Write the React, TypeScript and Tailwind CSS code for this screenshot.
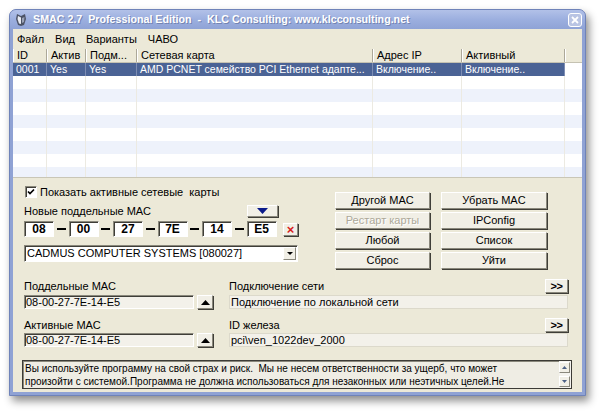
import React from "react";
import clsx from "clsx";

const colW = ["w-[34px]", "w-[39px]", "w-[51px]", "w-[236px]", "w-[89px]", "w-[103px]"];
const headers = ["ID", "Актив", "Подм...", "Сетевая карта", "Адрес IP", "Активный"];
const selRow = ["0001", "Yes", "Yes", "AMD PCNET семейство PCI Ethernet адапте...", "Включение..", "Включение.."];

function Btn({
  children,
  className,
  disabled,
}: {
  children?: React.ReactNode;
  className?: string;
  disabled?: boolean;
}) {
  return (
    <div
      className={clsx(
        "flex items-center justify-center border border-t-white border-l-white border-r-[#8a887c] border-b-[#8a887c] bg-[#f1efe6] text-[11px] leading-none shadow-[1px_1px_0_#3f3e38]",
        disabled ? "text-[#aca899] [text-shadow:1px_1px_0_#ffffff]" : "text-black",
        className
      )}
    >
      {children}
    </div>
  );
}

function Sunken({ children, className }: { children?: React.ReactNode; className?: string }) {
  return (
    <div
      className={clsx(
        "border border-t-[#8a887c] border-l-[#8a887c] border-r-white border-b-white shadow-[inset_1px_1px_0_#3f3e38]",
        className
      )}
    >
      {children}
    </div>
  );
}

function TitleBar() {
  return (
    <div className="flex h-[19px] items-center rounded-t-[6px] bg-gradient-to-b from-[#b2c1e8] via-[#9cafdf] to-[#8fa3d6] pl-[4px] pr-[3px]">
      <svg width="14" height="14" viewBox="0 0 14 14" className="shrink-0">
        <path d="M3 1 L7 3 L11 1 L12 6 L10 12 L7 13 L4 12 L2 6 Z" fill="#4c5366" />
        <path d="M4 3 L7 4.5 L7 11 L5 10.5 L3.5 6 Z" fill="#e9ecf3" />
        <path d="M8 5 L10.5 4 L10 9 L8 10 Z" fill="#9aa2b6" />
      </svg>
      <span className="ml-[5px] whitespace-pre text-[10.7px] font-bold text-white [text-shadow:1px_1px_0_#7384b2]">
        SMAC 2.7  Professional Edition  -  KLC Consulting: www.klcconsulting.net
      </span>
      <div className="ml-auto flex h-[14px] w-[14px] items-center justify-center rounded-[3px] border border-white bg-[#b9c4e3]">
        <svg width="8" height="8" viewBox="0 0 8 8">
          <path d="M1 1 L7 7 M7 1 L1 7" stroke="#ffffff" strokeWidth="1.8" />
        </svg>
      </div>
    </div>
  );
}

function Table() {
  const blanks = [0, 1, 2, 3, 4, 5, 6, 7, 8];
  return (
    <div className="h-[128px] overflow-hidden bg-white text-[10.5px]">
      <div className="flex h-[14px] border-b border-b-[#c5c2b2] bg-[#ece9d8] text-[11px]">
        {headers.map((h, i) => (
          <div
            key={h}
            className={clsx(
              colW[i],
              "flex items-center border-r border-r-[#aca899] pl-[4px] leading-none shadow-[inset_1px_0_0_#ffffff]"
            )}
          >
            {h}
          </div>
        ))}
        <div className="flex-1 shadow-[inset_1px_0_0_#ffffff]" />
      </div>
      <div className="flex h-[13px] pr-[17px]">
        {selRow.map((c, i) => (
          <div
            key={i}
            className={clsx(
              colW[i],
              "flex items-center overflow-hidden whitespace-nowrap border-r border-r-[#7d8db3] bg-[#4b6395] pl-[3px] leading-none text-white"
            )}
          >
            {c}
          </div>
        ))}
      </div>
      {blanks.map((r) => (
        <div key={r} className={clsx("flex h-[13px]", r % 2 === 1 ? "bg-[#eef2fb]" : "bg-white")}>
          {colW.map((w) => (
            <div key={w} className={clsx(w, "border-r border-r-[#eceae2]")} />
          ))}
        </div>
      ))}
    </div>
  );
}

function MacBox({ v }: { v: string }) {
  return (
    <Sunken className="flex h-[16px] w-[30px] items-center justify-center bg-white text-[12px] font-bold leading-none">
      {v}
    </Sunken>
  );
}

function Dash() {
  return (
    <div className="flex w-[14.5px] items-center justify-center">
      <div className="h-[2px] w-[9px] bg-black" />
    </div>
  );
}

function UpBtn() {
  return (
    <Btn className="h-[14px] w-[16px]">
      <svg width="9" height="5" viewBox="0 0 9 5">
        <path d="M0 5 L4.5 0 L9 5 Z" fill="#000" />
      </svg>
    </Btn>
  );
}

function MoreBtn() {
  return <Btn className="h-[14px] w-[23px] text-[10px] font-bold tracking-[-0.5px]">&gt;&gt;</Btn>;
}

export default function App() {
  const macs = ["08", "00", "27", "7E", "14", "E5"];
  return (
    <div className="h-[419px] w-[600px] bg-white pl-[9px] pt-[9px] font-['Liberation_Sans',Arial,sans-serif] text-black">
      <div className="flex h-[387px] w-[577px] flex-col rounded-t-[7px] border border-[#6f83b9] bg-[#8fa2d4] shadow-[3px_5px_8px_rgba(0,0,0,0.45)]">
        <TitleBar />
        <div className="mx-[3px] mb-[3px] flex flex-1 flex-col bg-[#ece9d8]">
          {/* menu */}
          <div className="flex h-[20px] items-center gap-[11px] pl-[4px] text-[11px]">
            <span>Файл</span>
            <span>Вид</span>
            <span>Варианты</span>
            <span>ЧАВО</span>
          </div>

          <Table />

          <div className="flex flex-1 flex-col border-t border-t-[#c9c6b6] pl-[11px]">
            {/* top section */}
            <div className="flex items-start">
              <div className="flex w-[274px] flex-col">
                <div className="mt-[8px] flex h-[12px] items-center text-[11px]">
                  <Sunken className="ml-[1px] flex h-[12px] w-[12px] items-center justify-center bg-white">
                    <svg width="8" height="8" viewBox="0 0 8 8">
                      <path d="M1 3.5 L3 5.5 L7 1.5" stroke="#000" strokeWidth="1.7" fill="none" />
                    </svg>
                  </Sunken>
                  <span className="ml-[3px] whitespace-pre">Показать активные сетевые  карты</span>
                </div>
                <div className="mt-[8px] flex h-[11px] items-end">
                  <span className="text-[11px] leading-[11px]">Новые поддельные МАС</span>
                  <Btn className="ml-auto mr-[20px] h-[12px] w-[31px]">
                    <svg width="11" height="6" viewBox="0 0 11 6">
                      <path d="M0 0 L11 0 L5.5 6 Z" fill="#0a1a8a" />
                    </svg>
                  </Btn>
                </div>
                <div className="mt-[4px] flex h-[16px] items-center">
                  {macs.map((m, i) => (
                    <React.Fragment key={i}>
                      {i > 0 && <Dash />}
                      <MacBox v={m} />
                    </React.Fragment>
                  ))}
                  <Btn className="ml-auto h-[13px] w-[15px] text-[13px] font-bold text-[#d8201a]">
                    <span className="text-[#d8201a]">×</span>
                  </Btn>
                </div>
                <Sunken className="mt-[8px] flex h-[17px] items-center bg-white pl-[2px] text-[11px]">
                  <span>CADMUS COMPUTER SYSTEMS [080027]</span>
                  <Btn className="ml-auto mr-[1px] h-[13px] w-[13px] shadow-none">
                    <svg width="6" height="3" viewBox="0 0 6 3">
                      <path d="M0 0 L6 0 L3 3 Z" fill="#000" />
                    </svg>
                  </Btn>
                </Sunken>
              </div>

              <div className="ml-[37px] mt-[14px] grid grid-cols-[95px_106px] gap-x-[11px] gap-y-[3px]">
                <Btn className="h-[17px]">Другой MAC</Btn>
                <Btn className="h-[17px]">Убрать MAC</Btn>
                <Btn className="h-[17px]" disabled>
                  Рестарт карты
                </Btn>
                <Btn className="h-[17px]">IPConfig</Btn>
                <Btn className="h-[17px]">Любой</Btn>
                <Btn className="h-[17px]">Список</Btn>
                <Btn className="h-[17px]">Сброс</Btn>
                <Btn className="h-[17px]">Уйти</Btn>
              </div>
            </div>

            {/* middle section */}
            <div className="mt-[9px] grid grid-cols-[189px_339px] gap-x-[16px] text-[11px]">
              <div className="flex flex-col">
                <div className="flex h-[15px] items-end leading-[13px]">Поддельные МАС</div>
                <div className="mt-[2px] flex h-[14px] items-center gap-[3px]">
                  <Sunken className="flex h-[14px] w-[170px] items-center bg-[#f3f1ea] pl-[1px] leading-none">
                    08-00-27-7E-14-E5
                  </Sunken>
                  <UpBtn />
                </div>
                <div className="mt-[8px] flex h-[15px] items-end leading-[13px]">Активные МАС</div>
                <div className="mt-[1px] flex h-[14px] items-center gap-[3px]">
                  <Sunken className="flex h-[14px] w-[170px] items-center bg-[#f3f1ea] pl-[1px] leading-none">
                    08-00-27-7E-14-E5
                  </Sunken>
                  <UpBtn />
                </div>
              </div>
              <div className="flex flex-col">
                <div className="flex h-[15px] items-end justify-between">
                  <span className="leading-[13px]">Подключение сети</span>
                  <MoreBtn />
                </div>
                <div className="mt-[2px] flex h-[14px] items-center border border-[#dcd9cb] bg-[#f3f1ea] pl-[1px] leading-none">
                  Подключение по локальной сети
                </div>
                <div className="mt-[8px] flex h-[15px] items-end justify-between">
                  <span className="leading-[13px]">ID железа</span>
                  <MoreBtn />
                </div>
                <div className="mt-[1px] flex h-[14px] items-center border border-[#dcd9cb] bg-[#f3f1ea] pl-[1px] leading-none">
                  pci\ven_1022dev_2000
                </div>
              </div>
            </div>

            {/* disclaimer */}
            <div className="ml-[-2px] mt-[13px] flex h-[29px] w-[550px] border border-[#3c3b36] bg-[#efede4] shadow-[inset_1px_1px_0_#8a887c]">
              <div className="flex-1 overflow-hidden pl-[2px] pt-[1px] text-[10px] leading-[13px]">
                <div className="whitespace-pre">Вы используйте программу на свой страх и риск.  Мы не несем ответственности за ущерб, что может</div>
                <div className="whitespace-pre">произойти с системой.Программа не должна использоваться для незаконных или неэтичных целей.Не</div>
              </div>
              <div className="flex w-[12px] flex-col justify-between bg-[#f4f3ee] py-[1px]">
                <Btn className="h-[11px] w-[11px] shadow-none">
                  <svg width="5" height="3" viewBox="0 0 5 3">
                    <path d="M0 3 L2.5 0 L5 3 Z" fill="#4d6185" />
                  </svg>
                </Btn>
                <Btn className="h-[11px] w-[11px] shadow-none">
                  <svg width="5" height="3" viewBox="0 0 5 3">
                    <path d="M0 0 L5 0 L2.5 3 Z" fill="#4d6185" />
                  </svg>
                </Btn>
              </div>
            </div>
          </div>
        </div>
      </div>
    </div>
  );
}
